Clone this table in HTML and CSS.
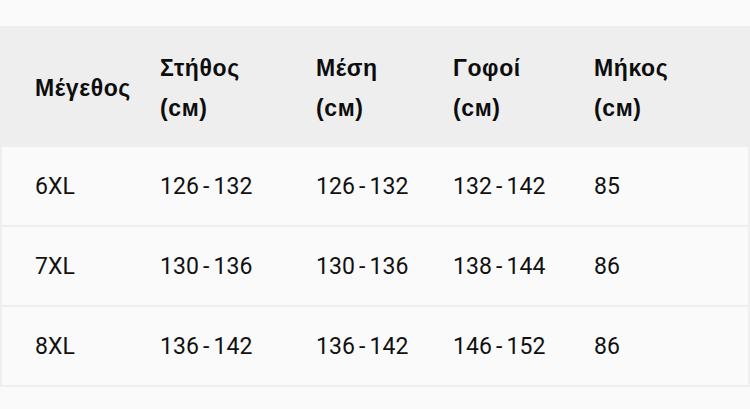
FILE: index.html
```html
<!DOCTYPE html>
<html lang="el">
<head>
<meta charset="utf-8">
<link rel="stylesheet" href="styles.css">
</head>
<body>
<div class="table">
  <div class="row head">
    <div class="cell">Μέγεθος</div>
    <div class="cell">Στήθος<br>(см)</div>
    <div class="cell">Μέση<br>(см)</div>
    <div class="cell">Γοφοί<br>(см)</div>
    <div class="cell">Μήκος<br>(см)</div>
  </div>
  <div class="row body">
    <div class="cell">6XL</div>
    <div class="cell">126 - 132</div>
    <div class="cell">126 - 132</div>
    <div class="cell">132 - 142</div>
    <div class="cell">85</div>
  </div>
  <div class="row body">
    <div class="cell">7XL</div>
    <div class="cell">130 - 136</div>
    <div class="cell">130 - 136</div>
    <div class="cell">138 - 144</div>
    <div class="cell">86</div>
  </div>
  <div class="row body">
    <div class="cell">8XL</div>
    <div class="cell">136 - 142</div>
    <div class="cell">136 - 142</div>
    <div class="cell">146 - 152</div>
    <div class="cell">86</div>
  </div>
</div>
</body>
</html>
```
FILE: styles.css
```css
html, body {
  margin: 0;
  padding: 0;
  background: #fafafa;
}
body {
  padding-top: 26px;
  font-family: Roboto, "Liberation Sans", sans-serif;
  color: #111;
}
.table {
  width: 750px;
}
.row {
  display: grid;
  align-items: center;
}
.cell {
  padding-left: 35px;
  white-space: nowrap;
}
.head {
  grid-template-columns: 125px 156px 137px 141px 191px;
  background: #eeeeee;
  padding: 22px 0 19px;
  font-family: "Liberation Sans", Arial, sans-serif;
  font-weight: 700;
  font-size: 23px;
  letter-spacing: 0.6px;
  line-height: 40px;
  color: #0d0d0d;
}
.body {
  grid-template-columns: 123px 156px 137px 141px 189px;
  height: 78px;
  width: 746px;
  border: 2px solid #efefef;
  border-top: none;
  font-size: 23px;
  letter-spacing: 0.1px;
  word-spacing: -1.8px;
  color: #111;
}
.body .cell:first-child {
  padding-left: 33px;
}
```
